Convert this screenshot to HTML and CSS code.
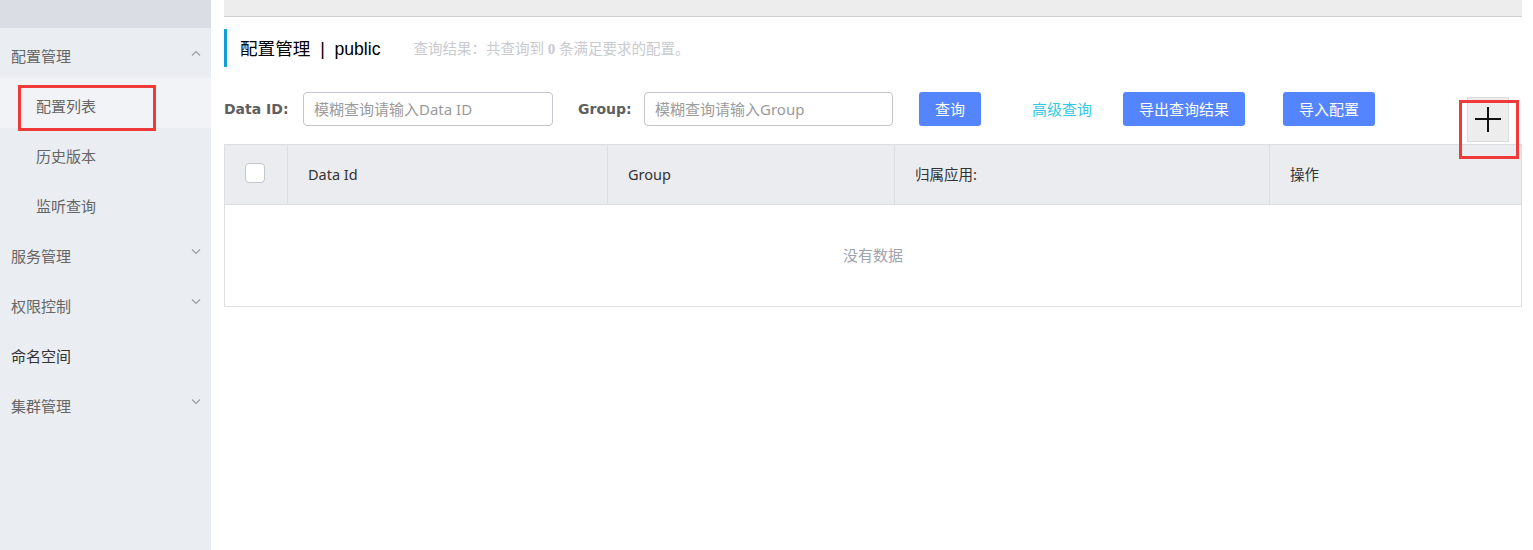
FILE: index.html
```html
<!DOCTYPE html>
<html lang="zh-CN">
<head>
<meta charset="utf-8">
<title>配置管理</title>
<link rel="stylesheet" href="styles.css">
</head>
<body>
<aside class="sidebar">
  <div class="side-top"></div>
  <div class="menu-item">
    <span>配置管理</span>
    <svg class="chev chev-up" width="10" height="6" viewBox="0 0 10 6"><polyline points="1,5.5 5,1.5 9,5.5" fill="none" stroke="#9a9ca5" stroke-width="1.1"/></svg>
  </div>
  <div class="menu-item sub active">
    <span>配置列表</span>
    <div class="mark mark-side"></div>
  </div>
  <div class="menu-item sub"><span>历史版本</span></div>
  <div class="menu-item sub"><span>监听查询</span></div>
  <div class="menu-item">
    <span>服务管理</span>
    <svg class="chev" width="10" height="6" viewBox="0 0 10 6"><polyline points="1,0.5 5,4.5 9,0.5" fill="none" stroke="#9a9ca5" stroke-width="1.1"/></svg>
  </div>
  <div class="menu-item">
    <span>权限控制</span>
    <svg class="chev" width="10" height="6" viewBox="0 0 10 6"><polyline points="1,0.5 5,4.5 9,0.5" fill="none" stroke="#9a9ca5" stroke-width="1.1"/></svg>
  </div>
  <div class="menu-item dark"><span>命名空间</span></div>
  <div class="menu-item">
    <span>集群管理</span>
    <svg class="chev" width="10" height="6" viewBox="0 0 10 6"><polyline points="1,0.5 5,4.5 9,0.5" fill="none" stroke="#9a9ca5" stroke-width="1.1"/></svg>
  </div>
</aside>
<main class="main">
  <div class="topbar"></div>
  <div class="title-row">
    <span class="title">配置管理 &nbsp;|&nbsp; public</span>
    <span class="summary">查询结果：共查询到 <b>0</b> 条满足要求的配置。</span>
  </div>
  <div class="filter-row">
    <label class="label label-id">Data ID:</label>
    <div class="input">模糊查询请输入Data ID</div>
    <label class="label label-group">Group:</label>
    <div class="input input-group">模糊查询请输入Group</div>
    <button class="btn btn-query">查询</button>
    <a class="link">高级查询</a>
    <button class="btn btn-export">导出查询结果</button>
    <button class="btn btn-import">导入配置</button>
    <div class="plus">
      <svg width="26" height="26" viewBox="0 0 26 26"><path d="M0 12h26M13 0v25" stroke="#111" stroke-width="2" fill="none"/></svg>
      <div class="mark mark-plus"></div>
    </div>
  </div>
  <div class="table">
    <div class="thead">
      <div class="th th-check"><span class="checkbox"></span></div>
      <div class="th">Data Id</div>
      <div class="th">Group</div>
      <div class="th">归属应用:</div>
      <div class="th">操作</div>
    </div>
    <div class="tbody">没有数据</div>
  </div>
</main>
</body>
</html>
```

FILE: styles.css
```css
* { box-sizing: border-box; }
html, body { margin: 0; padding: 0; }
body {
  display: flex;
  height: 550px;
  background: #fff;
  font-family: "Noto Sans", "Noto Sans CJK SC", sans-serif;
  font-size: 15px;
  color: #333;
  overflow: hidden;
}
.sidebar {
  width: 211px;
  flex: none;
  background: #eaedf1;
  display: flex;
  flex-direction: column;
}
.side-top {
  height: 28px;
  background: #dadde4;
}
.menu-item {
  position: relative;
  height: 50px;
  padding: 4px 10px 0 11px;
  display: flex;
  align-items: center;
  justify-content: space-between;
  color: #666;
  font-size: 15px;
}
.menu-item.sub { padding-left: 36px; }
.menu-item.active { background: #f2f3f7; }
.menu-item.dark { color: #333; }
.chev { margin-top: -6px; }
.chev-up { margin-top: -4px; }
.mark {
  position: absolute;
  border: 3px solid #f03a3a;
}
.mark-side {
  left: 18px;
  top: 7px;
  width: 138px;
  height: 46px;
}
.main {
  flex: 1;
  padding: 0 11px 0 13px;
  display: flex;
  flex-direction: column;
}
.topbar {
  height: 17px;
  background: #ededed;
  border-bottom: 1px solid #cfcfcf;
}
.title-row {
  margin-top: 12px;
  height: 38px;
  border-left: 3px solid #10a0d6;
  padding-left: 13px;
  padding-bottom: 2px;
  display: flex;
  align-items: center;
}
.title {
  font-size: 17.6px;
  color: #000;
  font-family: "Liberation Sans", "Noto Sans CJK SC", sans-serif;
}
.summary {
  margin-left: 33px;
  font-size: 14.5px;
  color: #c8cacf;
}
.summary b { font-family: "Liberation Serif", serif; font-size: 15px; }
.filter-row {
  margin-top: 25px;
  display: flex;
  align-items: flex-start;
}
.label {
  height: 34px;
  display: flex;
  align-items: center;
  font-family: "DejaVu Sans", sans-serif;
  font-weight: bold;
  font-size: 14px;
  color: #5f5f5f;
}
.label-id { width: 79px; }
.label-group { width: 66px; margin-left: 25px; }
.input {
  width: 250px;
  height: 34px;
  border: 1px solid #c4c6cf;
  border-radius: 4px;
  padding-left: 10px;
  padding-bottom: 1px;
  display: flex;
  align-items: center;
  color: #9b9b9b;
  font-size: 15px;
}
.input-group { width: 249px; }
.btn {
  height: 34px;
  border: none;
  border-radius: 3px;
  background: #5584ff;
  color: #fff;
  font-family: "Noto Sans CJK SC", sans-serif;
  font-size: 15px;
  padding: 0 16px 1px;
}
.btn-query { margin-left: 26px; width: 62px; }
.link {
  margin-left: 51px;
  height: 34px;
  padding-bottom: 1px;
  display: flex;
  align-items: center;
  color: #33c8e3;
  font-size: 15px;
}
.btn-export { margin-left: 31px; width: 122px; }
.btn-import { margin-left: 38px; width: 92px; }
.plus {
  position: relative;
  margin-left: auto;
  margin-right: 13px;
  margin-top: 5px;
  width: 42px;
  height: 45px;
  background: #ededed;
  border: 1px solid #dcdcdc;
  display: flex;
  align-items: center;
  justify-content: center;
}
.mark-plus {
  left: -9px;
  top: 2px;
  width: 60px;
  height: 59px;
}
.table {
  margin-top: 2px;
  border: 1px solid #dcdee3;
}
.thead {
  display: grid;
  grid-template-columns: 62px 320px 287px 375px 1fr;
  height: 60px;
  background: #ebecf0;
  border-bottom: 1px solid #dcdee3;
}
.th {
  display: flex;
  align-items: center;
  padding-left: 20px;
  padding-bottom: 2px;
  border-left: 1px solid #dcdee3;
  font-size: 14.5px;
  color: #333;
}
.th:first-child { border-left: none; }
.th-check { padding-left: 20px; }
.checkbox {
  width: 20px;
  height: 20px;
  background: #fff;
  border: 1px solid #c4c6cf;
  border-radius: 4px;
  margin-top: -2px;
}
.tbody {
  height: 101px;
  padding-bottom: 2px;
  display: flex;
  align-items: center;
  justify-content: center;
  color: #a0a2ad;
  font-size: 15px;
}
```
